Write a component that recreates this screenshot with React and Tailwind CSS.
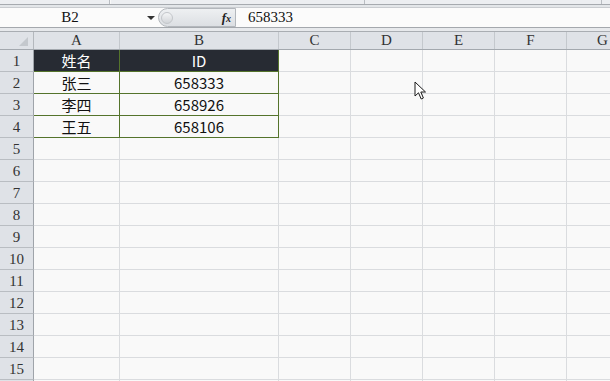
import React from 'react'

const MONO = { fontFamily: '"Liberation Serif", "DejaVu Serif", serif' }
const SANS = { fontFamily: '"Noto Sans CJK SC", "Noto Sans", sans-serif' }

const cols = [
  { key: 'A', w: 'w-[86px]' },
  { key: 'B', w: 'w-[159px]' },
  { key: 'C', w: 'w-[72px]' },
  { key: 'D', w: 'w-[72px]' },
  { key: 'E', w: 'w-[72px]' },
  { key: 'F', w: 'w-[72px]' },
  { key: 'G', w: 'w-[72px]' },
]

const data = [
  ['姓名', 'ID'],
  ['张三', '658333'],
  ['李四', '658926'],
  ['王五', '658106'],
]

function Cursor() {
  return (
    <svg className="absolute left-[414px] top-[81px]" width="14" height="20" viewBox="0 0 14 20">
      <path d="M1 1 L1 15 L4.5 11.8 L7.2 18 L9.4 17 L6.8 11 L11.5 11 Z" fill="#fff" stroke="#1a1a1a" strokeWidth="1" strokeLinejoin="round" />
    </svg>
  )
}

function FormulaBar() {
  return (
    <div className="h-[19px] flex bg-[#fbfbfb]">
      <div className="w-[158px] flex items-center relative">
        <span className="w-[140px] text-center text-[15px] leading-none text-[#111]" style={MONO}>B2</span>
        <svg className="absolute left-[147px] top-[8px]" width="8" height="4" viewBox="0 0 8 4">
          <path d="M0 0 L8 0 L4 4 Z" fill="#333" />
        </svg>
      </div>
      <div className="w-[78px] h-[19px] rounded-l-full border border-[#b3b7bc] bg-gradient-to-b from-[#eef0f2] to-[#dcdfe3] flex items-center justify-between pl-[2px] pr-[4px]">
        <div className="w-[12px] h-[12px] rounded-full border border-[#c3c6ca] bg-gradient-to-b from-[#f4f5f6] to-[#d2d5d9]" />
        <span className="text-[13px] italic font-bold text-[#222] leading-none" style={{ fontFamily: '"Liberation Serif", serif' }}>
          f<span className="text-[10px]">x</span>
        </span>
      </div>
      <div className="flex-1 flex items-center pl-[12px] text-[15px] leading-none text-[#111]" style={MONO}>658333</div>
    </div>
  )
}

function HeaderRow() {
  return (
    <div className="flex h-[19px] border-t border-b border-t-[#a9adb2] border-b-[#a3a8ae] bg-[#dfe2e7]">
      <div className="w-[34px] shrink-0 border-r border-[#b4b8bd] relative">
        <svg className="absolute right-[5px] bottom-[3px]" width="9" height="9" viewBox="0 0 9 9">
          <path d="M9 0 L9 9 L0 9 Z" fill="#c4c8cd" />
        </svg>
      </div>
      {cols.map((c) => (
        <div key={c.key} className={`${c.w} shrink-0 border-r border-[#c4c8cd] flex items-end justify-center pb-[1px] text-[15px] leading-none text-[#333]`} style={MONO}>
          {c.key}
        </div>
      ))}
    </div>
  )
}

function Row({ n, label = true }) {
  const d = data[n - 1]
  return (
    <div className="flex h-[22px]">
      <div className="w-[34px] shrink-0 border-r border-b border-r-[#9fa4aa] border-b-[#b9bdc2] bg-[#dfe2e7] flex items-end justify-center pb-[2px] text-[15px] leading-none text-[#333]" style={MONO}>
        {label ? n : null}
      </div>
      {cols.map((c, i) => {
        const inTable = d && i < 2
        const head = n === 1 && inTable
        return (
          <div
            key={c.key}
            className={`${c.w} shrink-0 border-r border-b flex items-center justify-center text-[15px] leading-none ${inTable ? 'border-[#55742c]' : 'border-[#dadcdf]'} ${head ? 'bg-[#272b33] text-white' : 'bg-[#f9f9f9] text-[#111]'}`}
            style={SANS}
          >
            {inTable ? d[i] : null}
          </div>
        )
      })}
    </div>
  )
}

export default function App() {
  return (
    <div className="w-[610px] h-[381px] overflow-hidden bg-[#f9f9f9] relative">
      <div className="h-[4px] flex bg-[#eceef1]">
        <div className="w-[110px] border-r border-[#b9bdc2]" />
        <div className="w-[255px] border-l border-r border-l-[#f8f8f8] border-r-[#b9bdc2]" />
        <div className="w-[237px] border-r border-[#b9bdc2]" />
      </div>
      <div className="h-[1px] bg-[#a6aaaf]" />
      <div className="h-[3px] bg-[#e3e6e9] border-b border-[#c9ccd0]" />
      <FormulaBar />
      <div className="h-[1px] bg-[#a4a8ad]" />
      <div className="h-[3px] bg-[#e7e9ec]" />
      <HeaderRow />
      {Array.from({ length: 15 }, (_, i) => (
        <Row key={i} n={i + 1} />
      ))}
      <Row n={16} label={false} />
      <Cursor />
    </div>
  )
}
